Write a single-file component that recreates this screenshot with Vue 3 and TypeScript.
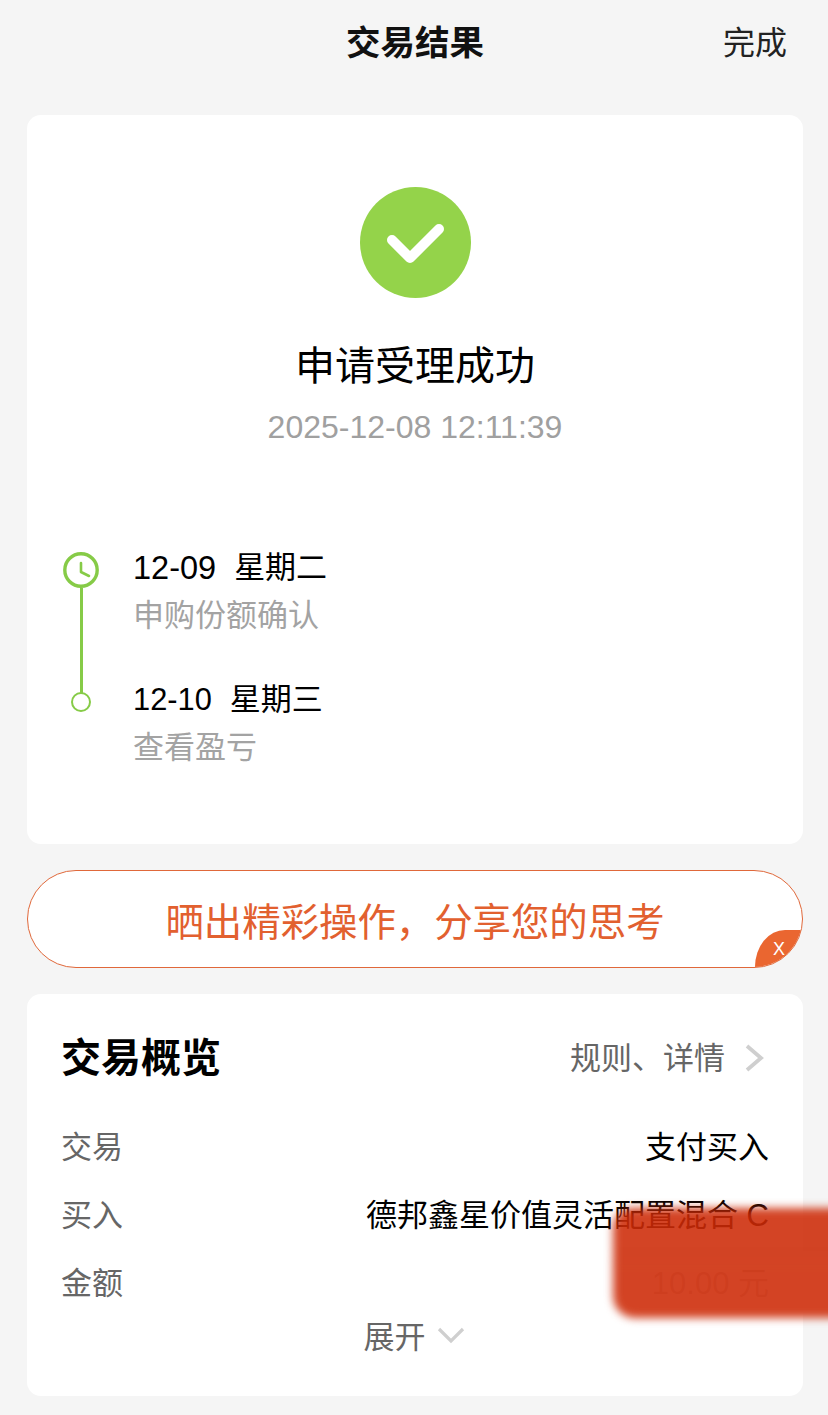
<template>
  <div class="page">
    <div class="nav">
      <span class="nav-title">交易结果</span>
      <a class="nav-done">完成</a>
    </div>

    <div class="card result">
      <svg class="ok-icon" viewBox="0 0 111 111">
        <circle cx="55.5" cy="55.5" r="55.5" fill="#94d34a" />
        <path d="M32 53 L50 71 L79 42" fill="none" stroke="#fff" stroke-width="10" stroke-linecap="round" stroke-linejoin="round" />
      </svg>
      <div class="result-title">申请受理成功</div>
      <div class="result-time">2025-12-08 12:11:39</div>

      <div class="steps">
        <div class="step" v-for="(step, i) in steps" :key="step.date">
          <div class="step-mark">
            <svg v-if="i === 0" class="clock" viewBox="0 0 36 36">
              <circle cx="18" cy="18" r="16.2" fill="none" stroke="#86cb47" stroke-width="3.4" />
              <path d="M18 11 V20 L26 24" fill="none" stroke="#86cb47" stroke-width="2.6" stroke-linecap="round" stroke-linejoin="round" />
            </svg>
            <span v-else class="dot"></span>
            <span v-if="i < steps.length - 1" class="line"></span>
          </div>
          <div class="step-text">
            <div class="step-date"><span class="step-day">{{ step.date }}</span><span>{{ step.week }}</span></div>
            <div class="step-desc">{{ step.desc }}</div>
          </div>
        </div>
      </div>
    </div>

    <div class="share">
      <span>晒出精彩操作，分享您的思考</span>
      <span class="share-close">X</span>
    </div>

    <div class="card overview">
      <div class="ov-head">
        <span class="ov-title">交易概览</span>
        <span class="ov-link">
          规则、详情
          <svg class="arrow-right" viewBox="0 0 20 28">
            <path d="M3 2 L17 14 L3 26" fill="none" stroke="#cfcfcf" stroke-width="3.8" />
          </svg>
        </span>
      </div>
      <div class="ov-row" v-for="row in rows" :key="row.label">
        <span class="ov-label">{{ row.label }}</span>
        <span class="ov-value">{{ row.value }}</span>
      </div>
      <div class="ov-more">
        展开
        <svg class="arrow-down" viewBox="0 0 28 18">
          <path d="M2 3 L14 15 L26 3" fill="none" stroke="#cfcfcf" stroke-width="3.2" />
        </svg>
      </div>
    </div>

    <div class="smudge"></div>
  </div>
</template>

<script setup lang="ts">
const steps = [
  { date: "12-09", week: "星期二", desc: "申购份额确认" },
  { date: "12-10", week: "星期三", desc: "查看盈亏" },
];

const rows = [
  { label: "交易", value: "支付买入" },
  { label: "买入", value: "德邦鑫星价值灵活配置混合 C" },
  { label: "金额", value: "10.00 元" },
];
</script>

<style>
html,
body {
  margin: 0;
  background: #f5f5f5;
}
</style>

<style scoped>
.page {
  position: relative;
  width: 828px;
  height: 1415px;
  overflow: hidden;
  box-sizing: border-box;
  padding: 0 25px 0 27px;
  background: #f5f5f5;
  font-family: "Liberation Sans", "Noto Sans CJK SC", sans-serif;
  color: #000;
}

.nav {
  height: 115px;
  display: flex;
  justify-content: center;
  position: relative;
}

.nav-title {
  margin-top: 23px;
  font-size: 34.5px;
  line-height: 40px;
  font-weight: 700;
  color: #111;
}

.nav-done {
  position: absolute;
  right: 16px;
  top: 23px;
  font-size: 32px;
  line-height: 40px;
  color: #222;
}

.card {
  background: #fff;
  border-radius: 14px;
}

.result {
  height: 729px;
  display: flex;
  flex-direction: column;
  align-items: center;
  padding-top: 72px;
  box-sizing: border-box;
}

.ok-icon {
  width: 111px;
  height: 111px;
}

.result-title {
  margin-top: 43px;
  font-size: 40px;
  line-height: 50px;
}

.result-time {
  margin-top: 16px;
  font-size: 32px;
  line-height: 40px;
  color: #a0a0a0;
}

.steps {
  align-self: stretch;
  margin-top: 105px;
  padding-left: 36px;
}

.step {
  display: flex;
  height: 132px;
}

.step-mark {
  width: 36px;
  margin-right: 34px;
  display: flex;
  flex-direction: column;
  align-items: center;
}

.clock {
  width: 36px;
  height: 36px;
  flex: none;
}

.line {
  flex: none;
  width: 3px;
  height: 105px;
  background: #86cb47;
}

.dot {
  flex: none;
  width: 20px;
  height: 20px;
  box-sizing: border-box;
  margin-top: 8px;
  border: 2.5px solid #86cb47;
  border-radius: 50%;
  background: #fff;
}

.step-text {
  font-size: 31px;
  line-height: 40px;
  margin-top: -4px;
}

.step-date {
  display: flex;
  gap: 18px;
}

.step-day {
  font-size: 32.5px;
}

.step:last-child .step-day {
  font-size: 30.8px;
}

.step-desc {
  margin-top: 8px;
  color: #a3a3a3;
}

.share {
  position: relative;
  height: 98px;
  margin-top: 26px;
  box-sizing: border-box;
  border: 1px solid #e0683a;
  border-radius: 49px;
  background: #fff;
  overflow: hidden;
  display: flex;
  align-items: center;
  justify-content: center;
  font-size: 38.4px;
  color: #e2602f;
}

.share-close {
  position: absolute;
  right: -1px;
  bottom: -1px;
  width: 48px;
  height: 38px;
  background: #ea6630;
  border-top-left-radius: 30px 37px;
  font-size: 18px;
  line-height: 38px;
  text-align: center;
  color: #fff;
}

.overview {
  height: 402px;
  margin-top: 26px;
  padding: 33px 34px 0 34px;
  box-sizing: border-box;
}

.ov-head {
  display: flex;
  justify-content: space-between;
  align-items: center;
  height: 56px;
  margin-bottom: 27px;
}

.ov-title {
  font-size: 40px;
  font-weight: 700;
}

.ov-link {
  display: flex;
  align-items: center;
  font-size: 31px;
  color: #666;
}

.arrow-right {
  width: 20px;
  height: 28px;
  margin-top: 6px;
  margin-left: 19px;
  margin-right: 5px;
}

.ov-row {
  display: flex;
  justify-content: space-between;
  align-items: center;
  height: 68px;
  font-size: 31px;
}

.ov-label {
  color: #666;
}

.ov-more {
  display: flex;
  justify-content: center;
  align-items: center;
  height: 40px;
  font-size: 31px;
  color: #666;
}

.arrow-down {
  width: 28px;
  height: 18px;
  margin-top: 2px;
  margin-left: 11px;
  margin-right: 2px;
}

.smudge {
  position: absolute;
  left: 613px;
  top: 1208px;
  width: 240px;
  height: 110px;
  border-radius: 20px 0 0 22px;
  background: linear-gradient(rgba(205, 42, 7, 0.88) 32%, rgba(210, 64, 32, 0.98) 55%);
  filter: blur(4px);
}
</style>
